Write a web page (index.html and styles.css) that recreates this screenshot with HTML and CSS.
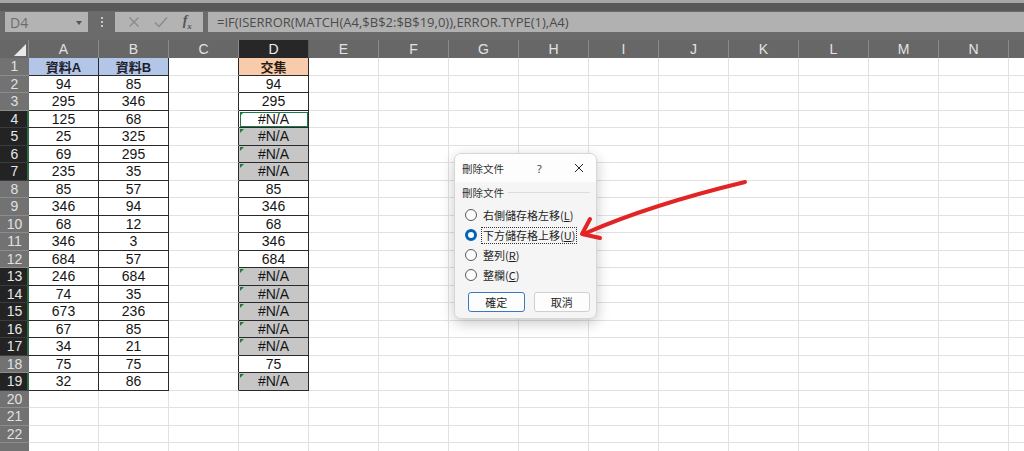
FILE: index.html
```html
<!DOCTYPE html>
<html lang="zh-Hant">
<head>
<meta charset="utf-8">
<title>Excel</title>
<link rel="stylesheet" href="styles.css">
</head>
<body>
<div class="app">
  <div class="topstrip"></div>
  <div class="band"></div>
  <div class="fbar">
    <div class="namebox"><span>D4</span><svg class="caret" width="6" height="4" viewBox="0 0 6 4"><path d="M0 0H6L3 4Z" fill="#555"/></svg></div>
    <div class="vdots"><i></i><i></i><i></i></div>
    <div class="fnbox">
      <svg width="12" height="12" viewBox="0 0 12 12"><path d="M1.5 1.5L10.5 10.5M10.5 1.5L1.5 10.5" stroke="#8a8a8a" stroke-width="1.3" fill="none"/></svg>
      <svg width="14" height="12" viewBox="0 0 14 12"><path d="M1 6.5L5 10.5L13 1.5" stroke="#8a8a8a" stroke-width="1.3" fill="none"/></svg>
      <span class="fx">f<sub>x</sub></span>
    </div>
    <div class="formula">=IF(ISERROR(MATCH(A4,$B$2:$B$19,0)),ERROR.TYPE(1),A4)</div>
  </div>
  <div class="gap"></div>
  <div class="sheet">
    <div class="corner"></div><div class="ch">A</div><div class="ch">B</div><div class="ch">C</div><div class="ch sel">D</div>
    <div class="chrest"><span>E</span><span>F</span><span>G</span><span>H</span><span>I</span><span>J</span><span>K</span><span>L</span><span>M</span><span>N</span><span></span></div>

    <div class="rh">1</div><div class="c t blue">資料A</div><div class="c t blue">資料B</div><div class="c cr"></div><div class="c t org">交集</div><div class="rest"></div>
    <div class="rh">2</div><div class="c t">94</div><div class="c t">85</div><div class="c cr"></div><div class="c t">94</div><div class="rest"></div>
    <div class="rh">3</div><div class="c t">295</div><div class="c t">346</div><div class="c cr"></div><div class="c t">295</div><div class="rest"></div>
    <div class="rh sel">4</div><div class="c t">125</div><div class="c t">68</div><div class="c cr"></div><div class="c t act err">#N/A</div><div class="rest"></div>
    <div class="rh sel">5</div><div class="c t">25</div><div class="c t">325</div><div class="c cr"></div><div class="c t g err">#N/A</div><div class="rest"></div>
    <div class="rh sel">6</div><div class="c t">69</div><div class="c t">295</div><div class="c cr"></div><div class="c t g err">#N/A</div><div class="rest"></div>
    <div class="rh sel">7</div><div class="c t">235</div><div class="c t">35</div><div class="c cr"></div><div class="c t g err">#N/A</div><div class="rest"></div>
    <div class="rh">8</div><div class="c t">85</div><div class="c t">57</div><div class="c cr"></div><div class="c t">85</div><div class="rest"></div>
    <div class="rh">9</div><div class="c t">346</div><div class="c t">94</div><div class="c cr"></div><div class="c t">346</div><div class="rest"></div>
    <div class="rh">10</div><div class="c t">68</div><div class="c t">12</div><div class="c cr"></div><div class="c t">68</div><div class="rest"></div>
    <div class="rh">11</div><div class="c t">346</div><div class="c t">3</div><div class="c cr"></div><div class="c t">346</div><div class="rest"></div>
    <div class="rh">12</div><div class="c t">684</div><div class="c t">57</div><div class="c cr"></div><div class="c t">684</div><div class="rest"></div>
    <div class="rh sel">13</div><div class="c t">246</div><div class="c t">684</div><div class="c cr"></div><div class="c t g err">#N/A</div><div class="rest"></div>
    <div class="rh sel">14</div><div class="c t">74</div><div class="c t">35</div><div class="c cr"></div><div class="c t g err">#N/A</div><div class="rest"></div>
    <div class="rh sel">15</div><div class="c t">673</div><div class="c t">236</div><div class="c cr"></div><div class="c t g err">#N/A</div><div class="rest"></div>
    <div class="rh sel">16</div><div class="c t">67</div><div class="c t">85</div><div class="c cr"></div><div class="c t g err">#N/A</div><div class="rest"></div>
    <div class="rh sel">17</div><div class="c t">34</div><div class="c t">21</div><div class="c cr"></div><div class="c t g err">#N/A</div><div class="rest"></div>
    <div class="rh">18</div><div class="c t">75</div><div class="c t">75</div><div class="c cr"></div><div class="c t">75</div><div class="rest"></div>
    <div class="rh sel">19</div><div class="c t">32</div><div class="c t">86</div><div class="c cr"></div><div class="c t g err">#N/A</div><div class="rest"></div>
    <div class="rh">20</div><div class="c"></div><div class="c"></div><div class="c"></div><div class="c"></div><div class="rest"></div>
    <div class="rh">21</div><div class="c"></div><div class="c"></div><div class="c"></div><div class="c"></div><div class="rest"></div>
    <div class="rh">22</div><div class="c"></div><div class="c"></div><div class="c"></div><div class="c"></div><div class="rest"></div>
    <div class="rh"></div><div class="c"></div><div class="c"></div><div class="c"></div><div class="c"></div><div class="rest"></div>
  </div>

  <div class="dialog">
    <div class="dtitle">
      <span class="dname">刪除文件</span>
      <span class="dq">?</span>
      <svg class="dclose" width="10" height="10" viewBox="0 0 10 10"><path d="M1 1L9 9M9 1L1 9" stroke="#222" stroke-width="1" fill="none"/></svg>
    </div>
    <div class="dbody">
      <div class="glabel"><span>刪除文件</span><i></i></div>
      <div class="opts">
        <div class="opt"><span class="radio"></span><span class="otext">右側儲存格左移(<u>L</u>)</span></div>
        <div class="opt"><span class="radio on"></span><span class="otext focus">下方儲存格上移(<u>U</u>)</span></div>
        <div class="opt"><span class="radio"></span><span class="otext">整列(<u>R</u>)</span></div>
        <div class="opt"><span class="radio"></span><span class="otext">整欄(<u>C</u>)</span></div>
      </div>
      <div class="btns">
        <div class="btn primary">確定</div>
        <div class="btn">取消</div>
      </div>
    </div>
  </div>

  <svg class="arrow" width="1024" height="451" viewBox="0 0 1024 451">
    <path d="M745 182 Q650 205 586 233" stroke="#e22424" stroke-width="4" fill="none" stroke-linecap="round"/>
    <path d="M590 219 L582 234 L600 238" stroke="#e22424" stroke-width="4" fill="none" stroke-linecap="round" stroke-linejoin="round"/>
  </svg>
</div>
</body>
</html>
```

FILE: styles.css
```css
* { box-sizing: border-box; }
html, body { margin: 0; padding: 0; }
body {
  width: 1024px;
  height: 451px;
  overflow: hidden;
  background: #6b6b6b;
  font-family: "Noto Sans CJK TC", "Noto Sans", sans-serif;
}
.app { position: relative; width: 1024px; height: 451px; overflow: hidden; }

.topstrip { height: 3px; background: #a6a6a6; }
.band { height: 8px; background: #585858; }

.fbar {
  display: flex;
  align-items: stretch;
  height: 22px;
  padding: 1px 0 1px 5px;
  background: #6b6b6b;
}
.namebox {
  width: 83px;
  background: #b3b3b3;
  display: flex;
  align-items: center;
  justify-content: space-between;
  padding: 0 6px 0 5px;
  font-family: "Open Sans", sans-serif;
  font-size: 14px;
  color: #6c6c6c;
}
.caret { margin-top: 1px; }
.vdots {
  width: 27px;
  display: flex;
  flex-direction: column;
  align-items: center;
  justify-content: center;
  gap: 2px;
}
.vdots i { width: 2px; height: 2px; background: #c8c8c8; display: block; }
.fnbox {
  width: 88px;
  background: #b3b3b3;
  display: flex;
  align-items: center;
  justify-content: space-around;
  padding: 0 4px 0 6px;
}
.fx {
  font-family: "Liberation Serif", serif;
  font-style: italic;
  font-size: 14px;
  color: #555;
  font-weight: 700;
}
.fx sub { font-size: 9px; }
.formula {
  flex: 1;
  margin-left: 5px;
  background: #b1b1b1;
  font-family: "Open Sans", sans-serif;
  font-size: 13px;
  color: #4b4b4b;
  line-height: 20px;
  padding-left: 9px;
  white-space: nowrap;
}
.gap { height: 7px; }

.sheet {
  display: grid;
  grid-template-columns: 29px 70px 70px 70px 70px 1fr;
  grid-template-rows: 18px;
  grid-auto-rows: 17.5px;
  background: #fff;
}
.corner {
  background: #676767;
  position: relative;
  border-right: 1px solid #8a8a8a;
}
.corner::after {
  content: "";
  position: absolute;
  right: 2px;
  bottom: 2px;
  width: 12px;
  height: 12px;
  background: #e9e9e9;
  clip-path: polygon(100% 0, 100% 100%, 0 100%);
}
.ch, .chrest span {
  background: #676767;
  color: #e2e2e2;
  font-family: "Liberation Sans", sans-serif;
  font-size: 14px;
  line-height: 18px;
  text-align: center;
  border-right: 1px solid #8a8a8a;
}
.ch.sel { background: #272727; color: #ededed; border-right-color: #5a5a5a; }
.chrest { display: flex; background: #676767; overflow: hidden; }
.chrest span { flex: 0 0 70px; }

.rh {
  background: #727272;
  color: #e0e0e0;
  font-family: "Liberation Sans", sans-serif;
  font-size: 14px;
  display: flex;
  align-items: center;
  justify-content: center;
  border-bottom: 1px solid #8c8c8c;
}
.rh.sel { background: #232323; color: #e6e6e6; border-bottom-color: #3c3c3c; box-shadow: inset -2px 0 0 #2d6b45; }

.c {
  position: relative;
  background: #fff;
  border-right: 1px solid #e1e1e1;
  border-bottom: 1px solid #e1e1e1;
  font-family: "Liberation Sans", "Noto Sans CJK TC", sans-serif;
  font-size: 14px;
  display: flex;
  align-items: center;
  justify-content: center;
  color: #141414;
  white-space: nowrap;
}
.c.t { border-right-color: #2a2a2a; border-bottom-color: #2a2a2a; }
.c.cr { border-right-color: #2a2a2a; }
.c.blue { background: #b4c6e7; font-weight: 700; font-size: 13px; color: #1c1c2a; }
.c.org { background: #f8cbad; font-weight: 700; font-size: 13px; color: #2a1a10; }
.c.g { background: #c6c6c6; }
.c.act { outline: 1px solid #1f7a4a; outline-offset: -2px; }
.c.err::before {
  content: "";
  position: absolute;
  left: 1px;
  top: 1px;
  border-top: 4px solid #1f7a3c;
  border-right: 4px solid transparent;
}
.rest {
  background-color: #fff;
  background-image: repeating-linear-gradient(to right, transparent 0 69px, #e1e1e1 69px 70px);
  border-bottom: 1px solid #e1e1e1;
}

.dialog {
  position: absolute;
  left: 454px;
  top: 153px;
  width: 143px;
  height: 166px;
  border-radius: 7px;
  background: #f5f5f5;
  border: 1px solid #d6d6d6;
  box-shadow: 0 4px 14px rgba(0,0,0,0.22);
  overflow: hidden;
  font-size: 11px;
  color: #1d1d1d;
}
.dtitle {
  height: 28px;
  background: #fdfdfd;
  display: flex;
  align-items: center;
  padding-left: 7px;
}
.dname { width: 75px; font-size: 10.5px; color: #333; }
.dq { width: 37px; font-family: "Noto Sans", sans-serif; font-size: 11px; color: #444; }
.dclose { display: block; }
.dbody { padding: 0 6px 0 7px; }
.glabel {
  display: flex;
  align-items: center;
  gap: 4px;
  height: 18px;
  margin-top: 1px;
  font-size: 10.5px;
  color: #333;
}
.glabel i { flex: 1; height: 1px; background: #dcdcdc; display: block; }
.opts { padding: 4px 0 0 3px; }
.opt { display: flex; align-items: center; height: 20px; gap: 4px; }
.radio {
  width: 12px;
  height: 12px;
  border-radius: 50%;
  border: 1px solid #5a5a5a;
  background: #fcfcfc;
  flex: none;
}
.radio.on { border: 3.5px solid #0063b8; background: #fff; }
.otext { padding: 0 1px; border: 1px solid transparent; line-height: 15px; }
.otext.focus { border: 1px dotted #333; }
.otext u { text-decoration-thickness: 1px; text-underline-offset: 1px; }
.btns { display: flex; gap: 9px; margin: 7px 0 0 6px; }
.btn {
  width: 57px;
  height: 20px;
  border: 1px solid #cfcfcf;
  border-radius: 3px;
  background: #fdfdfd;
  text-align: center;
  line-height: 18px;
  font-size: 11px;
}
.btn.primary { border-color: #3a78c2; }

.arrow { position: absolute; left: 0; top: 0; pointer-events: none; }
```
